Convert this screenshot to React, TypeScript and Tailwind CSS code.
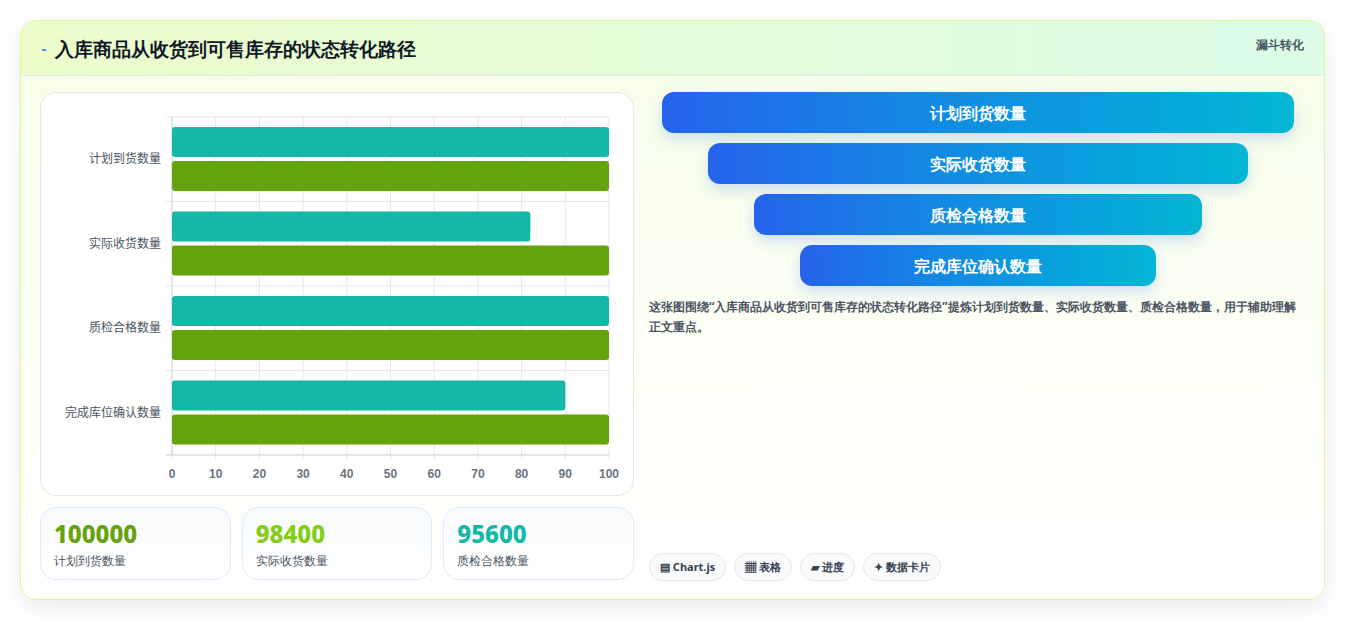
import React from "react";

const cats = ["计划到货数量", "实际收货数量", "质检合格数量", "完成库位确认数量"];
const teal = [100, 82, 100, 90];

function Chart() {
  const x0 = 131, w = 437, top = 24, bot = 362, band = (bot - top) / 4;
  return (
    <svg width="594" height="404" className="block">
      {Array.from({ length: 11 }).map((_, i) => (
        <g key={i}>
          <line x1={x0 + (w * i) / 10} x2={x0 + (w * i) / 10} y1={top} y2={bot + 5} stroke="#e5e7eb" />
          <text x={x0 + (w * i) / 10} y={385} textAnchor="middle" fontSize="12" fontWeight="600" fill="#6b7280" fontFamily="Liberation Sans, sans-serif">{i * 10}</text>
        </g>
      ))}
      {[0, 1, 2, 3, 4].map((i) => (
        <line key={i} x1={x0 - 6} x2={x0 + w} y1={top + band * i} y2={top + band * i} stroke="#e5e7eb" />
      ))}
      <line x1={x0} x2={x0} y1={top} y2={bot} stroke="#d1d5db" />
      <line x1={x0 - 6} x2={x0 + w} y1={bot} y2={bot} stroke="#d1d5db" />
      {cats.map((c, i) => {
        const y = top + band * i;
        return (
          <g key={c}>
            <rect x={x0} y={y + 10} width={(w * teal[i]) / 100} height={30} rx={3} fill="#14b8a6" />
            <rect x={x0} y={y + 44} width={w} height={30} rx={3} fill="#65a30d" />
            <text x={x0 - 11} y={y + band / 2 + 4} textAnchor="end" fontSize="12" fill="#4b5563" fontFamily="Noto Sans CJK SC, sans-serif">{c}</text>
          </g>
        );
      })}
    </svg>
  );
}

export default function App() {
  const funnel = ["计划到货数量", "实际收货数量", "质检合格数量", "完成库位确认数量"];
  const stats = [
    ["100000", "计划到货数量", "text-[#65a30d]"],
    ["98400", "实际收货数量", "text-[#84cc16]"],
    ["95600", "质检合格数量", "text-[#14b8a6]"],
  ];
  return (
    <div className="w-[1345px] h-[620px] bg-white pt-5 px-5 font-['Noto_Sans_CJK_SC',sans-serif]">
      <div className="w-[1305px] h-[580px] rounded-2xl border border-[#d9f99d] overflow-hidden shadow-[0_8px_24px_rgba(0,0,0,0.08)] bg-gradient-to-b from-[#f7fee7] to-white flex flex-col">
        <div className="h-[55px] shrink-0 flex items-start justify-between px-5 pt-[13px] bg-gradient-to-r from-[#ecfccb] to-[#dcfce7] border-b border-[#e5e7eb]">
          <div className="flex items-center gap-2">
            <span className="text-[10px] text-[#2563eb]">⌁</span>
            <h1 className="text-[19px] font-bold text-[#111827] leading-[30px]">入库商品从收货到可售库存的状态转化路径</h1>
          </div>
          <span className="text-xs font-bold text-[#4b5563] mt-[3px]">漏斗转化</span>
        </div>
        <div className="flex gap-[15px] px-[19px] pt-4 flex-1">
          <div className="w-[594px] flex flex-col gap-[11px]">
            <div className="h-[404px] rounded-2xl border border-[#e5e7eb] bg-white overflow-hidden">
              <Chart />
            </div>
            <div className="grid grid-cols-3 gap-[11px]">
              {stats.map(([v, l, c]) => (
                <div key={l} className="h-[73px] rounded-2xl border border-[#dbeafe] bg-gradient-to-b from-[#f8fafc] to-white px-[13px] pt-[11px]">
                  <div className={`text-[24px] font-extrabold leading-[30px] font-['Liberation_Sans',sans-serif] ${c}`}>{v}</div>
                  <div className="text-xs text-[#4b5563] mt-[4px]">{l}</div>
                </div>
              ))}
            </div>
          </div>
          <div className="flex-1 flex flex-col pr-[1px]">
            <div className="flex flex-col items-center gap-[10px] pl-[13px] pr-[12px]">
              {funnel.map((f, i) => (
                <div key={f} style={{ width: 632 - 92 * i }} className="h-[41px] rounded-xl bg-gradient-to-r from-[#2563eb] to-[#06b6d4] text-white font-bold text-[16px] flex items-center justify-center shadow-[0_6px_14px_rgba(37,99,235,0.2)]">{f}</div>
              ))}
            </div>
            <p className="mt-[11px] text-xs font-bold text-[#4b5563] leading-[20px]">这张图围绕“入库商品从收货到可售库存的状态转化路径”提炼计划到货数量、实际收货数量、质检合格数量，用于辅助理解正文重点。</p>
            <div className="mt-auto mb-[18px] flex gap-2">
              {["▤ Chart.js", "▦ 表格", "▰ 进度", "✦ 数据卡片"].map((t) => (
                <span key={t} className="h-7 px-[10px] rounded-full border border-[#e5e7eb] bg-[#f8fafc] text-[11px] font-bold text-[#374151] flex items-center">{t}</span>
              ))}
            </div>
          </div>
        </div>
      </div>
    </div>
  );
}
